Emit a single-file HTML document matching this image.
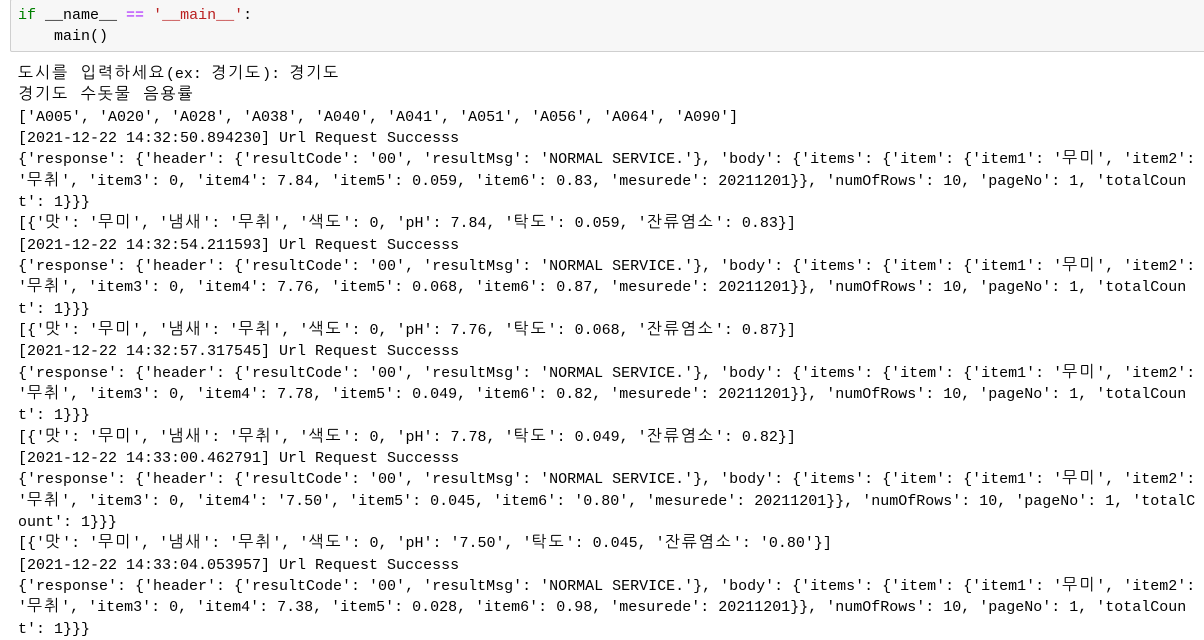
<!DOCTYPE html>
<html><head><meta charset="utf-8"><style>
body{margin:0;background:#fff;width:1204px;height:635px;overflow:hidden;font-family:"Liberation Mono","NanumGothic","Noto Sans CJK KR",monospace;font-size:15px;color:#000}
.in{position:absolute;left:10px;top:-1px;width:1200px;height:53px;background:#f7f7f7;border:1px solid #cfcfcf;border-radius:2px;box-sizing:border-box}
.code{position:absolute;left:18px;top:5px;line-height:21px;white-space:pre}
.out{position:absolute;left:18px;top:64px;line-height:21.33px;white-space:pre}
.k{font-size:16px;letter-spacing:2px}
.kw{color:#008000}.op{color:#aa22ff}.s{color:#ba2121}
</style></head><body>
<div class="in"></div>
<div class="code"><span class="kw">if</span> __name__ <span class="op">==</span> <span class="s">'__main__'</span>:
    main()</div>
<div class="out"><span class="k">도시를 입력하세요</span>(ex: <span class="k">경기도</span>): <span class="k">경기도</span>
<span class="k">경기도 수돗물 음용률</span>
['A005', 'A020', 'A028', 'A038', 'A040', 'A041', 'A051', 'A056', 'A064', 'A090']
[2021-12-22 14:32:50.894230] Url Request Successs
{'response': {'header': {'resultCode': '00', 'resultMsg': 'NORMAL SERVICE.'}, 'body': {'items': {'item': {'item1': '<span class="k">무미</span>', 'item2':
'<span class="k">무취</span>', 'item3': 0, 'item4': 7.84, 'item5': 0.059, 'item6': 0.83, 'mesurede': 20211201}}, 'numOfRows': 10, 'pageNo': 1, 'totalCoun
t': 1}}}
[{'<span class="k">맛</span>': '<span class="k">무미</span>', '<span class="k">냄새</span>': '<span class="k">무취</span>', '<span class="k">색도</span>': 0, 'pH': 7.84, '<span class="k">탁도</span>': 0.059, '<span class="k">잔류염소</span>': 0.83}]
[2021-12-22 14:32:54.211593] Url Request Successs
{'response': {'header': {'resultCode': '00', 'resultMsg': 'NORMAL SERVICE.'}, 'body': {'items': {'item': {'item1': '<span class="k">무미</span>', 'item2':
'<span class="k">무취</span>', 'item3': 0, 'item4': 7.76, 'item5': 0.068, 'item6': 0.87, 'mesurede': 20211201}}, 'numOfRows': 10, 'pageNo': 1, 'totalCoun
t': 1}}}
[{'<span class="k">맛</span>': '<span class="k">무미</span>', '<span class="k">냄새</span>': '<span class="k">무취</span>', '<span class="k">색도</span>': 0, 'pH': 7.76, '<span class="k">탁도</span>': 0.068, '<span class="k">잔류염소</span>': 0.87}]
[2021-12-22 14:32:57.317545] Url Request Successs
{'response': {'header': {'resultCode': '00', 'resultMsg': 'NORMAL SERVICE.'}, 'body': {'items': {'item': {'item1': '<span class="k">무미</span>', 'item2':
'<span class="k">무취</span>', 'item3': 0, 'item4': 7.78, 'item5': 0.049, 'item6': 0.82, 'mesurede': 20211201}}, 'numOfRows': 10, 'pageNo': 1, 'totalCoun
t': 1}}}
[{'<span class="k">맛</span>': '<span class="k">무미</span>', '<span class="k">냄새</span>': '<span class="k">무취</span>', '<span class="k">색도</span>': 0, 'pH': 7.78, '<span class="k">탁도</span>': 0.049, '<span class="k">잔류염소</span>': 0.82}]
[2021-12-22 14:33:00.462791] Url Request Successs
{'response': {'header': {'resultCode': '00', 'resultMsg': 'NORMAL SERVICE.'}, 'body': {'items': {'item': {'item1': '<span class="k">무미</span>', 'item2':
'<span class="k">무취</span>', 'item3': 0, 'item4': '7.50', 'item5': 0.045, 'item6': '0.80', 'mesurede': 20211201}}, 'numOfRows': 10, 'pageNo': 1, 'totalC
ount': 1}}}
[{'<span class="k">맛</span>': '<span class="k">무미</span>', '<span class="k">냄새</span>': '<span class="k">무취</span>', '<span class="k">색도</span>': 0, 'pH': '7.50', '<span class="k">탁도</span>': 0.045, '<span class="k">잔류염소</span>': '0.80'}]
[2021-12-22 14:33:04.053957] Url Request Successs
{'response': {'header': {'resultCode': '00', 'resultMsg': 'NORMAL SERVICE.'}, 'body': {'items': {'item': {'item1': '<span class="k">무미</span>', 'item2':
'<span class="k">무취</span>', 'item3': 0, 'item4': 7.38, 'item5': 0.028, 'item6': 0.98, 'mesurede': 20211201}}, 'numOfRows': 10, 'pageNo': 1, 'totalCoun
t': 1}}}</div>
</body></html>
